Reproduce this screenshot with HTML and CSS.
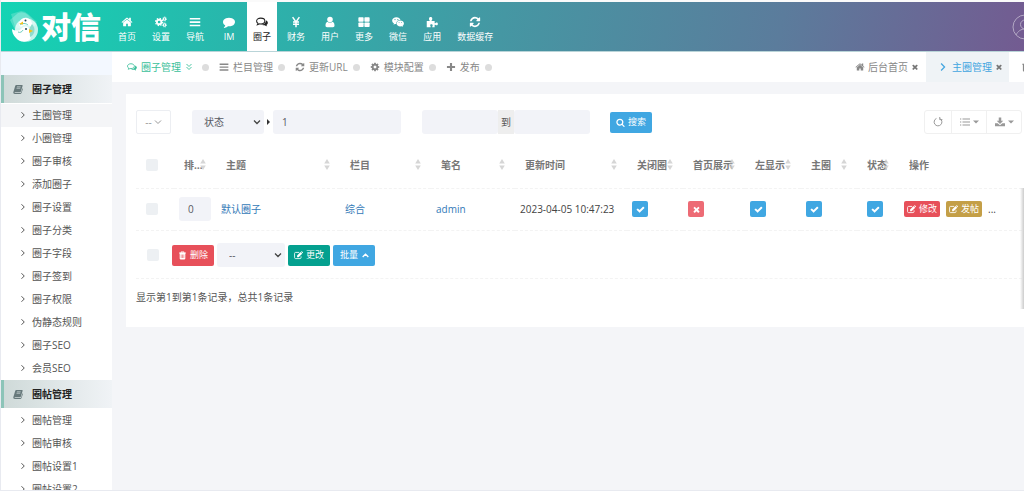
FILE: index.html
```html
<!DOCTYPE html>
<html lang="zh-CN">
<head>
  <meta charset="UTF-8" />
  <meta name="viewport" content="width=device-width, initial-scale=1" />
  <title>圈子管理</title>
  <link rel="stylesheet" href="styles.css">
</head>
<body>
  <svg class="sprite" aria-hidden="true">
    <symbol id="home" viewBox="0 0 1792 1792"><path d="M1472 992v480q0 26-19 45t-45 19h-384v-384h-256v384h-384q-26 0-45-19t-19-45v-480q0-1 .5-3t.5-3l575-474 575 474q1 2 1 6zm223-69l-62 74q-8 9-21 11h-3q-13 0-21-7l-692-577-692 577q-12 8-24 7-13-2-21-11l-62-74q-8-10-7-23.5t11-21.5l719-599q32-26 76-26t76 26l244 204v-195q0-14 9-23t23-9h192q14 0 23 9t9 23v408l219 182q10 8 11 21.5t-7 23.5z"/></symbol>
    <symbol id="cog" viewBox="0 0 1792 1792"><path d="M1152 896q0-106-75-181t-181-75-181 75-75 181 75 181 181 75 181-75 75-181zm512-109v222q0 12-8 23t-20 13l-185 28q-19 54-39 91 35 50 107 138 10 12 10 25t-9 23q-27 37-99 108t-94 71q-12 0-26-9l-138-108q-44 23-91 38-16 136-29 186-7 28-36 28h-222q-14 0-24.5-8.5t-11.5-21.5l-28-184q-49-16-90-37l-141 107q-10 9-25 9-14 0-25-11-126-114-165-168-7-10-7-23 0-12 8-23 15-21 51-66.5t54-70.5q-27-50-41-99l-183-27q-13-2-21-12.5t-8-23.5v-222q0-12 8-23t19-13l186-28q14-46 39-92-40-57-107-138-10-12-10-24 0-10 9-23 26-36 98.5-107.5t94.5-71.5q13 0 26 10l138 107q44-23 91-38 16-136 29-186 7-28 36-28h222q14 0 24.5 8.5t11.5 21.5l28 184q49 16 90 37l142-107q9-9 24-9 13 0 25 10 129 119 165 170 7 8 7 22 0 12-8 23-15 21-51 66.5t-54 70.5q26 50 41 98l183 28q13 2 21 12.5t8 23.5z"/></symbol>
    <symbol id="cogs" viewBox="0 0 16 16"><g fill="none" stroke="currentColor"><circle cx="5.5" cy="8" r="3" stroke-width="2.4"/><circle cx="5.5" cy="8" r="4.8" stroke-width="1.6" stroke-dasharray="1.9 1.87"/><circle cx="12.8" cy="4" r="1.6" stroke-width="1.5"/><circle cx="12.8" cy="4" r="2.7" stroke-width="1" stroke-dasharray="1.2 .92"/><circle cx="12.8" cy="12" r="1.6" stroke-width="1.5"/><circle cx="12.8" cy="12" r="2.7" stroke-width="1" stroke-dasharray="1.2 .92"/></g></symbol>
    <symbol id="bars" viewBox="0 0 16 16"><path d="M1 2.5h14v2.3H1zM1 7h14v2.3H1zM1 11.500h14v2.300H1z"/></symbol>
    <symbol id="comment" viewBox="0 0 1792 1792"><path d="M1792 896q0 174-120 321.500t-326 233-450 85.500q-70 0-145-8-198 175-460 242-49 14-114 22-17 2-30.500-9t-17.500-29v-1q-3-4-.5-12t2-10 4.500-9.500l6-9 7-8.500 8-9q7-8 31-34.500t34.500-38 31-39.500 32.500-51 27-59 26-76q-157-89-247.500-220t-90.500-281q0-174 120-321.500t326-233 450-85.500 450 85.500 326 233 120 321.500z"/></symbol>
    <symbol id="comments" viewBox="0 0 16 16"><path d="M6.300 2.800c3.100 0 5.500 1.700 5.500 3.900s-2.400 3.900-5.500 3.900c-.6 0-1.100 0-1.600-.2-.8.600-1.700 1-2.700 1.200.4-.5.700-1 .8-1.700C1.500 9.200.8 8 .8 6.700c0-2.200 2.400-3.900 5.500-3.900z" fill="none" stroke="currentColor" stroke-width="1.400"/><path d="M13.200 5.500c1.500.7 2.600 1.900 2.600 3.400 0 1.200-.7 2.300-1.900 3 .2.800.6 1.300 1.100 1.900-1.300-.1-2.400-.7-3.300-1.400-2 .3-4-.1-5.300-1 4 .1 7.100-2.100 6.800-5.900z"/></symbol>
    <symbol id="yen" viewBox="0 0 16 16"><path d="M3.500 1.500 8 8l4.500-6.500M4 8h8M4 11h8M8 8v7" fill="none" stroke="currentColor" stroke-width="2"/></symbol>
    <symbol id="user" viewBox="0 0 16 16"><circle cx="8" cy="4.800" r="3.700"/><path d="M4.500 7.500C2.500 8.300 2 10.500 2 12.800 2 14.200 2.800 15 4 15h8c1.200 0 2-.8 2-2.200 0-2.300-.5-4.500-2.500-5.300-2 2-5 2-7 0z"/></symbol>
    <symbol id="large" viewBox="0 0 16 16"><rect x=".5" y="1.500" width="7" height="6" rx="1"/><rect x="8.500" y="1.500" width="7" height="6" rx="1"/><rect x=".5" y="8.500" width="7" height="6" rx="1"/><rect x="8.500" y="8.500" width="7" height="6" rx="1"/></symbol>
    <symbol id="wechat" viewBox="0 0 16 16"><path fill-rule="evenodd" d="M5.900 1.500c2.700 0 5 1.600 5.400 3.900-3-.1-5.600 1.900-5.600 4.500 0 .4.100.7.200 1-.7 0-1.300-.1-2-.2L2 11.700l.6-1.700C1 9 .2 7.700.2 6.100.2 3.500 2.800 1.500 5.900 1.500zM4 3.900a.8.800 0 1 0 0 1.600.8.800 0 0 0 0-1.600zm3.800 0a.8.800 0 1 0 0 1.600.8.800 0 0 0 0-1.600z"/><path fill-rule="evenodd" d="M11 6.100c2.700 0 4.900 1.700 4.900 3.900 0 1.300-.8 2.400-1.900 3.200l.4 1.500-1.600-.9c-.6.100-1.200.2-1.800.2-2.700 0-4.800-1.800-4.800-4s2.100-3.900 4.800-3.900zM9.400 8a.6.600 0 1 0 0 1.300.6.600 0 0 0 0-1.300zm3.200 0a.6.600 0 1 0 0 1.300.6.600 0 0 0 0-1.300z"/></symbol>
    <symbol id="puzzle" viewBox="0 0 16 16"><path d="M1 6.500h4.300C4.600 5.500 4 4.800 4 3.500 4 2.200 4.900 1.300 6.200 1.300s2.200.9 2.200 2.200c0 1.300-.7 2-1.200 3h4.300v3.200c1 .2 1.600-1 2.800-1 1 0 1.500.8 1.500 1.800s-.6 1.900-1.600 1.900c-1.200 0-1.700-.9-2.700-.7V15H8.300c-.2-1.300.8-1.800.6-2.800-.1-.8-.8-1.200-1.700-1.200s-1.600.5-1.600 1.400c0 1 .9 1.400.6 2.600H1z"/></symbol>
    <symbol id="refresh" viewBox="0 0 1792 1792"><path d="M1639 1056q0 5-1 7-64 268-268 434.500t-478 166.500q-146 0-282.500-55t-243.500-157l-129 129q-19 19-45 19t-45-19-19-45v-448q0-26 19-45t45-19h448q26 0 45 19t19 45-19 45l-137 137q71 66 161 102t187 36q134 0 250-65t186-179q11-17 53-117 8-23 30-23h192q13 0 22.500 9.500t9.500 22.500zm25-800v448q0 26-19 45t-45 19h-448q-26 0-45-19t-19-45 19-45l138-138q-148-137-349-137-134 0-250 65t-186 179q-11 17-53 117-8 23-30 23h-199q-13 0-22.500-9.500t-9.500-22.500v-7q65-268 270-434.500t480-166.500q146 0 284 55.500t245 156.500l130-129q19-19 45-19t45 19 19 45z"/></symbol>
    <symbol id="plus" viewBox="0 0 16 16"><path d="M6.300 1.500h3.400v4.800h4.800v3.400H9.700v4.800H6.300V9.700H1.500V6.300h4.800z"/></symbol>
    <symbol id="down2" viewBox="0 0 16 16"><path d="M3 2l5 5 5-5M3 8l5 5 5-5" fill="none" stroke="currentColor" stroke-width="1.800"/></symbol>
    <symbol id="right" viewBox="0 0 16 16"><path d="M5 2.500 10.500 8 5 13.500" fill="none" stroke="currentColor" stroke-width="2"/></symbol>
    <symbol id="down" viewBox="0 0 16 16"><path d="M2 5l6 6 6-6" fill="none" stroke="currentColor" stroke-width="2"/></symbol>
    <symbol id="up" viewBox="0 0 16 16"><path d="M3 10.500l5-5 5 5" fill="none" stroke="currentColor" stroke-width="2.400"/></symbol>
    <symbol id="check" viewBox="0 0 1792 1792"><path d="M1671 566q0 40-28 68l-724 724-136 136q-28 28-68 28t-68-28l-136-136-362-362q-28-28-28-68t28-68l136-136q28-28 68-28t68 28l294 295 656-657q28-28 68-28t68 28l136 136q28 28 28 68z"/></symbol>
    <symbol id="times" viewBox="0 0 1792 1792"><path d="M1490 1322q0 40-28 68l-136 136q-28 28-68 28t-68-28l-294-294-294 294q-28 28-68 28t-68-28l-136-136q-28-28-28-68t28-68l294-294-294-294q-28-28-28-68t28-68l136-136q28-28 68-28t68 28l294 294 294-294q28-28 68-28t68 28l136 136q28 28 28 68t-28 68l-294 294 294 294q28 28 28 68z"/></symbol>
    <symbol id="search" viewBox="0 0 1792 1792"><path d="M1216 832q0-185-131.500-316.500t-316.500-131.500-316.500 131.500-131.500 316.500 131.500 316.500 316.500 131.500 316.500-131.500 131.500-316.500zm512 832q0 52-38 90t-90 38q-54 0-90-38l-343-342q-179 124-399 124-143 0-273.500-55.500t-225-150-150-225-55.500-273.500 55.500-273.500 150-225 225-150 273.500-55.500 273.500 55.500 225 150 150 225 55.500 273.500q0 220-124 399l343 343q37 37 37 90z"/></symbol>
    <symbol id="book" viewBox="0 0 16 16"><path d="M5.200 1.500h9c1 0 1.400.7 1.100 1.600l-2.700 9c-.2.700-.8 1.100-1.500 1.100H3c-.6 0-.8.600-.3.900.2.200.5.200.8.200h8.300c.6 0 1-.3 1.200-.8l2-6.800c.8.300 1 .9.700 1.800l-2 6c-.3.800-.9 1.300-1.800 1.300H3C1.200 15.800 0 14.200.6 12.600l3-9.700c.3-.9.800-1.400 1.600-1.400z"/><path d="M6.300 4.500h6M5.600 6.800h6" stroke="#dfe7e8" stroke-width="1"/></symbol>
    <symbol id="edit" viewBox="0 0 16 16"><path d="M12.500 9.500v2.300c0 1-.7 1.700-1.700 1.700H2.700c-1 0-1.700-.7-1.700-1.700V4.200c0-1 .7-1.700 1.700-1.700h6.500" fill="none" stroke="currentColor" stroke-width="1.500"/><path d="M5.500 11V8.200l6.300-6.300 2.800 2.800L8.300 11zM12.500 1.200l.5-.5c.4-.4 1-.4 1.400 0l1.400 1.400c.4.400.4 1 0 1.400l-.5.500z"/></symbol>
    <symbol id="trash" viewBox="0 0 16 16"><path fill-rule="evenodd" d="M6 1h4c.6 0 .9.300 1.100.8l.4 1H14v1.500h-1V13c0 1.200-.6 2-1.500 2h-7C3.600 15 3 14.200 3 13V4.300H2V2.800h2.500l.4-1C5.100 1.300 5.400 1 6 1zm.3 1.200-.2.600h3.800l-.2-.6zM5 6v6.500h1V6zm2.500 0v6.500h1V6zM10 6v6.500h1V6z"/></symbol>
    <symbol id="redo" viewBox="0 0 16 16"><path d="M11.300 2.700A6.200 6.200 0 1 1 5.500 2.300" fill="none" stroke="currentColor" stroke-width="1.600"/><path d="M10.800 0v4.200H15" fill="none" stroke="currentColor" stroke-width="1.600"/></symbol>
    <symbol id="list" viewBox="0 0 16 16"><path d="M0 2.500h2v1.500H0zM4 2.500h12v1.500H4zM0 7.200h2v1.500H0zM4 7.200h12v1.500H4zM0 12h2v1.500H0zM4 12h12v1.500H4z"/></symbol>
    <symbol id="download" viewBox="0 0 16 16"><path d="M6 .8h4v5h3.200L8 11 2.800 5.800H6zM0 9.800h4.200L8 13l3.800-3.200H16v5H0z"/></symbol>
    <symbol id="caret" viewBox="0 0 8 8"><path d="M0 2h8L4 6z"/></symbol>
    <symbol id="sort" viewBox="0 0 6 12"><path d="M0 5l3-5 3 5zM0 7h6l-3 5z"/></symbol>
  </svg>

  <header class="topbar">
    <a class="logo" href="#">
      <svg class="logo-mark" viewBox="0 0 32 34" aria-hidden="true">
        <path d="M2 4 12 1q4 0 7 3l9 8-12 8L6 17z" fill="#fff" opacity=".2"/>
        <path d="M1 10l8-7q6-2 10 2l9 9-12 10-9-2z" fill="#fff" opacity=".25"/>
        <circle cx="17.500" cy="20" r="11.500" fill="#fff" opacity=".75"/>
        <path d="M10 15c0-5 4-8 8-7s6 5 5 10c-3-4-8-4-11-1z" fill="#fff"/>
        <path d="M23 14c4 4 3 11-2 13l-1-8z" fill="#8fdccf"/>
        <path d="M3 19c3 2 7 2 9 0 3-4 8-3 9 1 0 3-1 6 1 8-4 6-12 4-15 0-3-3-4-6-4-9z" fill="#fff"/>
        <path d="M9 22c2 1 4 0 5-2M11 15c2-2 6-2 8 0" fill="none" stroke="#6fcfc0"/>
        <circle cx="16.500" cy="10.500" r="1" fill="#245"/>
        <circle cx="17" cy="19" r="1" fill="#245"/>
        <path d="M14 11.500 10 14l4 .5zM20 19l4 2-4 2z" fill="#f4c21c"/>
      </svg>
      <span>对信</span>
    </a>
    <nav class="mainnav">
      <a href="#"><svg><use href="#home"/></svg>首页</a>
      <a href="#"><svg><use href="#cogs"/></svg>设置</a>
      <a href="#"><svg><use href="#bars"/></svg>导航</a>
      <a href="#"><svg><use href="#comment"/></svg>IM</a>
      <a href="#" class="active"><svg><use href="#comments"/></svg>圈子</a>
      <a href="#"><svg><use href="#yen"/></svg>财务</a>
      <a href="#"><svg><use href="#user"/></svg>用户</a>
      <a href="#"><svg><use href="#large"/></svg>更多</a>
      <a href="#"><svg class="wide"><use href="#wechat"/></svg>微信</a>
      <a href="#"><svg><use href="#puzzle"/></svg>应用</a>
      <a href="#"><svg><use href="#refresh"/></svg>数据缓存</a>
    </nav>
    <a class="avatar" href="#" aria-label="用户">
      <svg viewBox="0 0 26 26"><circle cx="13" cy="13" r="12"/><circle cx="13" cy="10.500" r="4.500"/><path d="M4 21c2-4 5-6 9-6s7 2 9 6"/></svg>
    </a>
  </header>

  <div class="layout">
    <aside class="sidebar">
      <h3><svg><use href="#book"/></svg>圈子管理</h3>
      <ul>
        <li class="active"><a href="#"><svg><use href="#right"/></svg>主圈管理</a></li>
        <li><a href="#"><svg><use href="#right"/></svg>小圈管理</a></li>
        <li><a href="#"><svg><use href="#right"/></svg>圈子审核</a></li>
        <li><a href="#"><svg><use href="#right"/></svg>添加圈子</a></li>
        <li><a href="#"><svg><use href="#right"/></svg>圈子设置</a></li>
        <li><a href="#"><svg><use href="#right"/></svg>圈子分类</a></li>
        <li><a href="#"><svg><use href="#right"/></svg>圈子字段</a></li>
        <li><a href="#"><svg><use href="#right"/></svg>圈子签到</a></li>
        <li><a href="#"><svg><use href="#right"/></svg>圈子权限</a></li>
        <li><a href="#"><svg><use href="#right"/></svg>伪静态规则</a></li>
        <li><a href="#"><svg><use href="#right"/></svg>圈子SEO</a></li>
        <li><a href="#"><svg><use href="#right"/></svg>会员SEO</a></li>
      </ul>
      <h3><svg><use href="#book"/></svg>圈帖管理</h3>
      <ul>
        <li><a href="#"><svg><use href="#right"/></svg>圈帖管理</a></li>
        <li><a href="#"><svg><use href="#right"/></svg>圈帖审核</a></li>
        <li><a href="#"><svg><use href="#right"/></svg>圈帖设置1</a></li>
        <li><a href="#"><svg><use href="#right"/></svg>圈帖设置2</a></li>
      </ul>
    </aside>

    <main class="main">
      <div class="subbar">
        <nav class="crumbs">
          <a href="#" class="active"><svg><use href="#comments"/></svg>圈子管理<svg class="more"><use href="#down2"/></svg></a>
          <a href="#"><svg><use href="#bars"/></svg>栏目管理</a>
          <a href="#"><svg><use href="#refresh"/></svg>更新URL</a>
          <a href="#"><svg><use href="#cog"/></svg>模块配置</a>
          <a href="#"><svg><use href="#plus"/></svg>发布</a>
        </nav>
        <nav class="tabs">
          <a href="#"><svg><use href="#home"/></svg>后台首页<svg class="close"><use href="#times"/></svg></a>
          <a href="#" class="active"><svg><use href="#right"/></svg>主圈管理<svg class="close"><use href="#times"/></svg></a>
          <a href="#" class="cut" aria-label="清空"><svg><use href="#trash"/></svg></a>
        </nav>
      </div>

      <section class="card">
        <form class="filters">
          <button type="button" class="pick">--<svg><use href="#down"/></svg></button>
          <div class="field">
            <select class="control status" aria-label="字段"><option>状态</option></select>
            <i class="arrow"></i>
            <input class="control keyword" type="text" value="1" aria-label="关键词">
          </div>
          <div class="range">
            <input class="control" type="text" aria-label="开始时间">
            <span>到</span>
            <input class="control" type="text" aria-label="结束时间">
          </div>
          <button type="button" class="btn blue"><svg><use href="#search"/></svg>搜索</button>
          <div class="tools">
            <button type="button" aria-label="刷新"><svg><use href="#redo"/></svg></button>
            <button type="button" aria-label="列"><svg><use href="#list"/></svg><svg class="caret"><use href="#caret"/></svg></button>
            <button type="button" aria-label="导出"><svg><use href="#download"/></svg><svg class="caret"><use href="#caret"/></svg></button>
          </div>
        </form>

        <div class="table-wrap">
          <table>
            <colgroup>
              <col class="c-check"><col class="c-sm"><col class="c-title"><col class="c-cat"><col class="c-name"><col class="c-time">
              <col class="c-flag"><col class="c-home"><col class="c-flag"><col class="c-flag"><col class="c-sm"><col>
            </colgroup>
            <thead>
              <tr>
                <th class="center"><input type="checkbox" aria-label="全选"></th>
                <th><span class="clip">排序值</span><svg><use href="#sort"/></svg></th>
                <th>主题<svg><use href="#sort"/></svg></th>
                <th>栏目<svg><use href="#sort"/></svg></th>
                <th>笔名<svg><use href="#sort"/></svg></th>
                <th>更新时间<svg><use href="#sort"/></svg></th>
                <th>关闭圈<svg><use href="#sort"/></svg></th>
                <th>首页展示<svg><use href="#sort"/></svg></th>
                <th>左显示<svg><use href="#sort"/></svg></th>
                <th>主圈<svg><use href="#sort"/></svg></th>
                <th>状态<svg><use href="#sort"/></svg></th>
                <th>操作</th>
              </tr>
            </thead>
            <tbody>
              <tr>
                <td class="center"><input type="checkbox" aria-label="选择"></td>
                <td><input class="control order" type="text" value="0" aria-label="排序"></td>
                <td><a href="#">默认圈子</a></td>
                <td><a href="#">综合</a></td>
                <td><a href="#">admin</a></td>
                <td>2023-04-05 10:47:23</td>
                <td><button class="flag" aria-label="是"><svg><use href="#check"/></svg></button></td>
                <td><button class="flag no" aria-label="否"><svg><use href="#times"/></svg></button></td>
                <td><button class="flag" aria-label="是"><svg><use href="#check"/></svg></button></td>
                <td><button class="flag" aria-label="是"><svg><use href="#check"/></svg></button></td>
                <td class="state"><button class="flag" aria-label="是"><svg><use href="#check"/></svg></button></td>
                <td>
                  <div class="ops">
                    <button class="btn small red"><svg><use href="#edit"/></svg>修改</button>
                    <button class="btn small gold"><svg><use href="#edit"/></svg>发帖</button>
                    <span>...</span>
                  </div>
                </td>
              </tr>
            </tbody>
          </table>
          <div class="batch">
            <input type="checkbox" aria-label="全选">
            <button class="btn red"><svg><use href="#trash"/></svg>删除</button>
            <select class="control move" aria-label="栏目"><option>--</option></select>
            <button class="btn green"><svg><use href="#edit"/></svg>更改</button>
            <button class="btn blue">批量<svg><use href="#up"/></svg></button>
          </div>
        </div>
        <p class="total">显示第1到第1条记录，总共1条记录</p>
      </section>
    </main>
  </div>
</body>
</html>
```
FILE: styles.css
```css
* {
  box-sizing: border-box;
}

body {
  margin: 0;
  height: 100vh;
  display: flex;
  flex-direction: column;
  overflow: hidden;
  padding-top: 2px;
  border-left: 1px solid #e8eaf0;
  border-bottom: 1px solid #e8eaf0;
  background: #fafafa;
  color: #555;
  font: 10px/16px "Open Sans", "Noto Sans CJK SC", sans-serif;
}

a {
  color: inherit;
  text-decoration: none;
}

button,
input,
select {
  margin: 0;
  border: 0;
  font: inherit;
  color: inherit;
}

button {
  cursor: pointer;
}

svg {
  width: 10px;
  height: 10px;
  flex: none;
  fill: currentColor;
}

.sprite {
  position: absolute;
  width: 0;
  height: 0;
}

/* top bar */
.topbar {
  display: flex;
  flex: none;
  height: 50px;
  overflow: hidden;
  border-bottom: 1px solid #b9d4d8;
  background: linear-gradient(100deg, #13d4b4 0%, #2bb3ab 25%, #4597a3 49%, #5b7c9c 76%, #735b91 100%);
  color: #fff;
}

.logo {
  display: flex;
  align-items: center;
  width: 109px;
  padding-left: 8px;
  font-size: 30px;
  line-height: 48px;
  font-weight: 900;
}

.logo-mark {
  width: 32px;
  height: 34px;
}

.mainnav {
  display: flex;
}

.mainnav a {
  display: flex;
  flex-direction: column;
  align-items: center;
  gap: 2px;
  min-width: 34px;
  padding: 14px 8px 0;
  font-size: 9px;
  line-height: 14px;
}

.mainnav svg {
  width: 12px;
  height: 12px;
}

.mainnav .wide {
  width: 14px;
}

.mainnav .active {
  min-width: 30px;
  margin: 0 2px 0 1px;
  padding: 14px 6px 0;
  background: #fff;
  color: #222;
}

.avatar {
  margin: 12px -14px 0 auto;
  color: #b3a8c4;
}

.avatar svg {
  width: 26px;
  height: 26px;
  fill: none;
  stroke: currentColor;
}

.layout {
  display: flex;
  flex: 1;
  min-height: 0;
}

/* sidebar */
.sidebar {
  flex: none;
  width: 111px;
  padding-top: 23px;
  overflow: hidden;
  background: #f3f8ff;
}

.sidebar h3 {
  display: flex;
  align-items: center;
  gap: 9px;
  height: 28px;
  margin: 0;
  padding-left: 9px;
  border-left: 3px solid #8cc4b8;
  background: linear-gradient(90deg, #cfdad9, #f0f3f6);
  font-size: 10px;
  color: #222;
}

.sidebar h3 svg {
  color: #67797b;
}

.sidebar ul {
  margin: 0;
  padding: 1px 0 0;
  list-style: none;
  background: #fff;
}

.sidebar li a {
  display: flex;
  align-items: center;
  gap: 5px;
  height: 23px;
  padding: 0 0 2px 18px;
}

.sidebar li svg {
  width: 8px;
  height: 8px;
}

.sidebar .active {
  background: #f4f5f7;
}

/* breadcrumb and page tabs */
.main {
  flex: 1;
  min-width: 0;
  background: #f4f5f8;
}

.subbar {
  display: flex;
  justify-content: space-between;
  height: 30px;
  overflow: hidden;
  background: #fff;
  color: #888;
}

.crumbs {
  display: flex;
  align-items: center;
  gap: 10px;
  padding-left: 15px;
}

.crumbs a {
  display: flex;
  align-items: center;
  gap: 4px;
}

.crumbs a::after {
  content: "";
  width: 7px;
  height: 7px;
  margin-left: 1px;
  border-radius: 50%;
  background: #ddd;
}

.crumbs .active {
  color: #3cbf9b;
}

.crumbs .more {
  width: 8px;
  height: 8px;
  margin-right: 4px;
}

.tabs {
  display: flex;
}

.tabs a {
  display: flex;
  align-items: center;
  gap: 3px;
  padding: 0 7px;
}

.tabs .close {
  width: 8px;
  height: 8px;
  color: #777;
}

.tabs .active {
  padding: 0 6px 0 12px;
  background: #eff3f6;
  color: #42a5e0;
}

.tabs .active svg:first-child {
  margin-right: 1px;
}

.tabs .cut {
  width: 15px;
  padding: 0 0 0 12px;
}

/* list card */
.card {
  margin: 12px 0 0 14px;
  padding: 16px 2px 22px 10px;
  background: #fff;
}

.filters {
  display: flex;
  align-items: center;
}

.pick {
  display: flex;
  align-items: center;
  justify-content: center;
  gap: 2px;
  width: 35px;
  height: 24px;
  margin-right: 21px;
  border: 1px solid #eceef2;
  border-radius: 2px;
  background: #fff;
  color: #999;
}

.pick svg {
  width: 8px;
  height: 8px;
}

.control {
  height: 24px;
  padding: 0 9px;
  border-radius: 3px;
  background: #f2f3f8;
  color: #575962;
  outline: none;
}

select.control {
  appearance: none;
  padding-left: 12px;
  background: #f2f3f8 url("data:image/svg+xml,%3Csvg xmlns='http://www.w3.org/2000/svg' viewBox='0 0 8 8'%3E%3Cpath d='M1 2.500l3 3 3-3' fill='none' stroke='%23444' stroke-width='1.300'/%3E%3C/svg%3E") no-repeat right 3px center / 8px;
}

.field {
  display: flex;
  align-items: center;
  margin-right: 21px;
}

.status {
  width: 72px;
}

.arrow {
  margin: 0 3px;
  border: 3px solid transparent;
  border-left: 3px solid #333;
  border-right: 0;
}

.keyword {
  width: 128px;
}

.range {
  display: flex;
  margin-right: 20px;
}

.range input {
  width: 76px;
}

.range span {
  width: 16px;
  background: #eee;
  line-height: 24px;
  text-align: center;
}

.btn {
  display: inline-flex;
  align-items: center;
  justify-content: center;
  gap: 3px;
  height: 21px;
  padding: 0 6px;
  border-radius: 2px;
  color: #fff;
  font-size: 9px;
  line-height: 14px;
  white-space: nowrap;
}

.btn svg {
  width: 9px;
  height: 9px;
}

.small {
  height: 16px;
  padding: 0 3px;
}

.blue {
  background: #40a7e2;
}

.red {
  background: #e7505a;
}

.green {
  background: #04a08f;
}

.gold {
  background: #c49f47;
}

.tools {
  display: flex;
  margin-left: auto;
  border: 1px solid #f0f0f0;
  border-radius: 3px;
}

.tools button {
  display: flex;
  align-items: center;
  justify-content: center;
  gap: 3px;
  width: 35px;
  height: 22px;
  padding: 0;
  background: none;
  color: #999;
}

.tools button:first-child {
  width: 26px;
}

.tools button + button {
  border-left: 1px solid #f0f0f0;
}

.tools .caret {
  width: 6px;
  height: 6px;
}

.table-wrap {
  position: relative;
  margin-top: 8px;
}

.table-wrap::after {
  content: "";
  position: absolute;
  top: 46px;
  right: -2px;
  bottom: -30px;
  width: 4px;
  background: linear-gradient(90deg, transparent, #ccc);
}

table {
  width: 100%;
  table-layout: fixed;
  border-collapse: collapse;
}

.c-check { width: 38px; }
.c-sm { width: 42px; }
.c-title { width: 124px; }
.c-cat { width: 91px; }
.c-name { width: 84px; }
.c-time { width: 112px; }
.c-flag { width: 56px; }
.c-home { width: 62px; }

th {
  position: relative;
  height: 46px;
  padding: 0 0 0 10px;
  border-bottom: 1px dashed #f3f3f3;
  color: #777;
  text-align: left;
  white-space: nowrap;
}

th svg {
  position: absolute;
  top: 17px;
  right: 10px;
  width: 6px;
  height: 11px;
  color: #ccc;
  opacity: 0.8;
}

.clip {
  display: block;
  width: 22px;
  overflow: hidden;
  text-overflow: ellipsis;
}

td {
  height: 42px;
  padding: 0 0 0 5px;
  border-bottom: 1px dashed #f3f3f3;
  color: #444;
  white-space: nowrap;
}

td a {
  color: #337ab7;
}

input[type="checkbox"] {
  appearance: none;
  display: block;
  width: 12px;
  height: 12px;
  border-radius: 2px;
  background: #edf0f3;
}

.center,
.state {
  padding-left: 10px;
}

.order {
  display: block;
  width: 32px;
}

.flag {
  display: flex;
  align-items: center;
  justify-content: center;
  width: 16px;
  height: 16px;
  padding: 0;
  border-radius: 2px;
  background: #40a7e2;
  color: #fff;
}

.flag.no {
  background: #ed6b75;
}

.flag svg {
  width: 9px;
  height: 9px;
}

.ops {
  display: flex;
  align-items: center;
  gap: 6px;
}

.batch {
  display: flex;
  align-items: center;
  gap: 3px;
  height: 48px;
  padding: 2px 0 0 11px;
  border-bottom: 1px dashed #f3f3f3;
}

.batch input {
  margin-right: 10px;
}

.batch .blue {
  padding: 0 5px 0 7px;
}

.move {
  width: 68px;
}

.total {
  margin: 10px 0 0;
}
```
